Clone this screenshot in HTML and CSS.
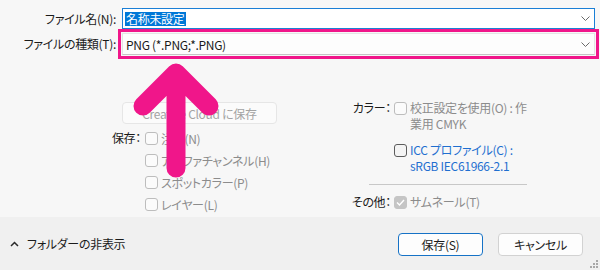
FILE: index.html
```html
<!DOCTYPE html>
<html lang="ja">
<head>
<meta charset="utf-8">
<title>保存ダイアログ</title>
<link rel="stylesheet" href="styles.css">
</head>
<body>
<div class="dialog">
  <section class="main">
    <div class="file-rows">
      <span class="field-label">ファイル名(N):</span>
      <div class="textbox"><span class="sel">名称未設定</span><svg class="chev" width="9" height="5" viewBox="0 0 9 5"><path d="M0.5 0.5 L4.5 4.5 L8.5 0.5"/></svg></div>
      <span class="field-label">ファイルの種類(T):</span>
      <div class="select highlighted"><span>PNG (*.PNG;*.PNG)</span><svg class="chev" width="9" height="5" viewBox="0 0 9 5"><path d="M0.5 0.5 L4.5 4.5 L8.5 0.5"/></svg></div>
    </div>

    <div class="options">
      <div class="opt-left">
        <button class="cc-btn" disabled>Creative Cloud に保存</button>
        <div class="save-group">
          <span class="group-label">保存：</span>
          <ul class="checks">
            <li><span class="cb"></span>注釈(N)</li>
            <li><span class="cb"></span>アルファチャンネル(H)</li>
            <li><span class="cb"></span>スポットカラー(P)</li>
            <li><span class="cb"></span>レイヤー(L)</li>
          </ul>
        </div>
      </div>

      <div class="opt-right">
        <span class="group-label">カラー：</span>
        <div class="opt-item disabled"><span class="cb"></span><span class="opt-text">校正設定を使用(O) : 作<br>業用 CMYK</span></div>

        <span></span>
        <div class="opt-item link icc"><span class="cb enabled"></span><span class="opt-text">ICC プロファイル(C) :<br>sRGB IEC61966-2.1</span></div>

        <div class="sep"></div>

        <span class="group-label">その他：</span>
        <div class="opt-item disabled"><span class="cb checked"><svg width="9" height="7" viewBox="0 0 9 7"><path d="M1 3.5 L3.5 6 L8 1"/></svg></span><span class="opt-text">サムネール(T)</span></div>
      </div>
    </div>
  </section>

  <footer class="footer">
    <div class="folder-toggle">
      <svg width="9" height="6" viewBox="0 0 9 6"><path d="M1 5 L4.5 1.5 L8 5"/></svg>
      <span>フォルダーの非表示</span>
    </div>
    <div class="actions">
      <button class="btn primary">保存(S)</button>
      <button class="btn">キャンセル</button>
    </div>
  </footer>

  <svg class="arrow" width="600" height="270" viewBox="0 0 600 270">
    <path d="M176 168 V74 M143 106 L176 73 L209 106"/>
  </svg>
  <svg class="grip" width="9" height="9" viewBox="0 0 9 9">
    <rect x="6" y="0" width="2" height="2"/>
    <rect x="3" y="3" width="2" height="2"/>
    <rect x="6" y="3" width="2" height="2"/>
    <rect x="0" y="6" width="2" height="2"/>
    <rect x="3" y="6" width="2" height="2"/>
    <rect x="6" y="6" width="2" height="2"/>
  </svg>
</div>
</body>
</html>
```

FILE: styles.css
```css
* { box-sizing: border-box; }

html, body {
  margin: 0;
  padding: 0;
}

body {
  width: 600px;
  height: 270px;
  overflow: hidden;
  font-family: "Noto Sans CJK JP", "Noto Sans", sans-serif;
  font-feature-settings: "palt";
  font-size: 12px;
  letter-spacing: -0.3px;
  color: #1b1b1b;
  background: #f0f0f0;
}

.dialog {
  position: relative;
  width: 600px;
  height: 270px;
}

.main {
  height: 217px;
  background: #f7f7f7;
  padding-top: 8px;
}

.file-rows {
  display: grid;
  grid-template-columns: 116px 1fr;
  column-gap: 6px;
  row-gap: 4px;
  padding-right: 5px;
  align-items: center;
}

.field-label {
  justify-self: end;
  white-space: nowrap;
  line-height: 16px;
}

.textbox,
.select {
  display: flex;
  align-items: center;
  padding: 0 3px 0 2px;
  white-space: nowrap;
}

.textbox {
  height: 21px;
  background: #ffffff;
  border: 1px solid #1a7fd6;
}

.sel {
  background: #0078d7;
  color: #ffffff;
  line-height: 14px;
  padding: 0 1px;
}

.select {
  height: 22px;
  background: #fdfdfd;
  border: 1px solid #e4e4e4;
  border-bottom-color: #c4c4c4;
  padding-left: 3px;
}

.highlighted {
  outline: 3px solid #f0168a;
  outline-offset: 1px;
}

.chev {
  margin-left: auto;
  margin-right: 1px;
}

.chev path {
  fill: none;
  stroke: #6a6a6a;
  stroke-width: 1;
}

/* options */
.options {
  display: flex;
  margin-top: 45px;
  padding-left: 112px;
}

.opt-left {
  width: 238px;
  padding-top: 2px;
}

.cc-btn {
  display: block;
  width: 155px;
  height: 22px;
  margin-left: 10px;
  padding: 0;
  font: inherit;
  font-feature-settings: "palt";
  letter-spacing: inherit;
  color: #a3a3a3;
  background: #fbfbfb;
  border: 1px solid #e6e6e6;
  border-radius: 4px;
}

.save-group {
  display: grid;
  grid-template-columns: 29px 1fr;
  column-gap: 4px;
  margin-top: 3px;
}

.group-label {
  justify-self: end;
  white-space: nowrap;
  line-height: 16px;
}

.save-group .group-label {
  margin-top: 3px;
}

.checks {
  list-style: none;
  margin: 0;
  padding: 0;
}

.checks li {
  display: flex;
  align-items: center;
  gap: 3px;
  height: 22px;
  color: #8c8c8c;
  white-space: nowrap;
}

.cb {
  flex: none;
  display: flex;
  align-items: center;
  justify-content: center;
  width: 13px;
  height: 13px;
  border: 1px solid #bdbdbd;
  border-radius: 3px;
  background: #fbfbfb;
}

.cb.enabled {
  border-color: #5c5c5c;
  background: #f4f4f4;
}

.cb.checked {
  border-color: #c5c5c5;
  background: #c5c5c5;
}

.cb.checked path {
  fill: none;
  stroke: #ffffff;
  stroke-width: 1.4;
}

.opt-right {
  display: grid;
  grid-template-columns: 41px 170px;
  column-gap: 3px;
  align-items: start;
}

.opt-item {
  display: flex;
  align-items: flex-start;
  gap: 3px;
  line-height: 16px;
  white-space: nowrap;
}

.opt-item .cb {
  margin-top: 2px;
}

.disabled { color: #8c8c8c; }

.link { color: #1f6fd0; }

.icc {
  margin-top: 5px;
}

.icc .cb {
  margin-top: 2px;
}

.sep {
  grid-column: 1 / -1;
  width: 158px;
  height: 1px;
  margin: 5px 0 4px 19px;
  background: #c8c8c8;
}

/* footer */
.footer {
  height: 53px;
  display: flex;
  align-items: center;
  justify-content: space-between;
  padding: 0 17px 0 10px;
  background: #f0f0f0;
}

.folder-toggle {
  display: flex;
  align-items: center;
  gap: 8px;
}

.folder-toggle svg path {
  fill: none;
  stroke: #2a2a2a;
  stroke-width: 1.5;
}

.actions {
  display: flex;
  gap: 15px;
  margin-top: 1px;
}

.btn {
  width: 85px;
  height: 23px;
  padding: 0;
  font: inherit;
  font-feature-settings: "palt";
  letter-spacing: inherit;
  color: #1b1b1b;
  background: #fdfdfd;
  border: 1px solid #d2d2d2;
  border-radius: 4px;
}

.btn.primary {
  border-color: #1672c6;
}

/* overlays */
.arrow {
  position: absolute;
  left: 0;
  top: 0;
  pointer-events: none;
}

.arrow path {
  fill: none;
  stroke: #f0168a;
  stroke-width: 19;
  stroke-linecap: round;
  stroke-linejoin: round;
}

.grip {
  position: absolute;
  right: 1px;
  bottom: 1px;
}

.grip rect { fill: #a8a8a8; }
```
